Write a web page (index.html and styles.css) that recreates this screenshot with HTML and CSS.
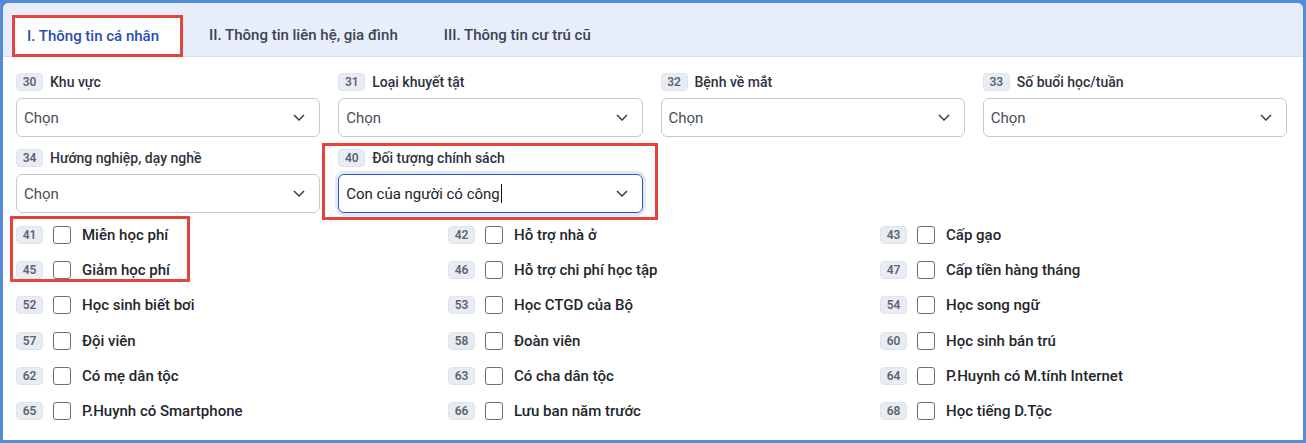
FILE: index.html
```html
<!DOCTYPE html>
<html lang="vi">
<head>
    <meta charset="UTF-8">
    <meta name="viewport" content="width=device-width, initial-scale=1.0">
    <title>Thông tin học sinh</title>
    <link rel="stylesheet" href="styles.css">
</head>
<body>

<div class="khung">
    <div class="the">

        <!-- Thanh tab -->
        <div class="tabs">
            <div class="tab tab-active">I. Thông tin cá nhân</div>
            <div class="tab">II. Thông tin liên hệ, gia đình</div>
            <div class="tab">III. Thông tin cư trú cũ</div>
        </div>

        <div class="noi-dung">

            <!-- Các ô chọn -->
            <div class="luoi-chon">
                <div class="truong">
                    <div class="nhan"><span class="so">30</span>Khu vực</div>
                    <div class="chon"><span>Chọn</span><svg width="12" height="7" viewBox="0 0 12 7"><path d="M1 1l5 5 5-5" fill="none" stroke="#3a3f4a" stroke-width="1.5"/></svg></div>
                </div>
                <div class="truong">
                    <div class="nhan"><span class="so">31</span>Loại khuyết tật</div>
                    <div class="chon"><span>Chọn</span><svg width="12" height="7" viewBox="0 0 12 7"><path d="M1 1l5 5 5-5" fill="none" stroke="#3a3f4a" stroke-width="1.5"/></svg></div>
                </div>
                <div class="truong">
                    <div class="nhan"><span class="so">32</span>Bệnh về mắt</div>
                    <div class="chon"><span>Chọn</span><svg width="12" height="7" viewBox="0 0 12 7"><path d="M1 1l5 5 5-5" fill="none" stroke="#3a3f4a" stroke-width="1.5"/></svg></div>
                </div>
                <div class="truong">
                    <div class="nhan"><span class="so">33</span>Số buổi học/tuần</div>
                    <div class="chon"><span>Chọn</span><svg width="12" height="7" viewBox="0 0 12 7"><path d="M1 1l5 5 5-5" fill="none" stroke="#3a3f4a" stroke-width="1.5"/></svg></div>
                </div>
                <div class="truong">
                    <div class="nhan"><span class="so">34</span>Hướng nghiệp, dạy nghề</div>
                    <div class="chon"><span>Chọn</span><svg width="12" height="7" viewBox="0 0 12 7"><path d="M1 1l5 5 5-5" fill="none" stroke="#3a3f4a" stroke-width="1.5"/></svg></div>
                </div>
                <div class="truong danh-dau">
                    <div class="nhan"><span class="so">40</span>Đối tượng chính sách</div>
                    <div class="chon chon-focus"><span class="gia-tri">Con của người có công<i class="con-tro"></i></span><svg width="12" height="7" viewBox="0 0 12 7"><path d="M1 1l5 5 5-5" fill="none" stroke="#3a3f4a" stroke-width="1.5"/></svg></div>
                </div>
            </div>

            <!-- Các ô đánh dấu -->
            <div class="luoi-check">
                <div class="khung-do"></div>

                <label class="dong"><span class="so">41</span><span class="o"></span>Miễn học phí</label>
                <label class="dong"><span class="so">42</span><span class="o"></span>Hỗ trợ nhà ở</label>
                <label class="dong"><span class="so">43</span><span class="o"></span>Cấp gạo</label>

                <label class="dong"><span class="so">45</span><span class="o"></span>Giảm học phí</label>
                <label class="dong"><span class="so">46</span><span class="o"></span>Hỗ trợ chi phí học tập</label>
                <label class="dong"><span class="so">47</span><span class="o"></span>Cấp tiền hàng tháng</label>

                <label class="dong"><span class="so">52</span><span class="o"></span>Học sinh biết bơi</label>
                <label class="dong"><span class="so">53</span><span class="o"></span>Học CTGD của Bộ</label>
                <label class="dong"><span class="so">54</span><span class="o"></span>Học song ngữ</label>

                <label class="dong"><span class="so">57</span><span class="o"></span>Đội viên</label>
                <label class="dong"><span class="so">58</span><span class="o"></span>Đoàn viên</label>
                <label class="dong"><span class="so">60</span><span class="o"></span>Học sinh bán trú</label>

                <label class="dong"><span class="so">62</span><span class="o"></span>Có mẹ dân tộc</label>
                <label class="dong"><span class="so">63</span><span class="o"></span>Có cha dân tộc</label>
                <label class="dong"><span class="so">64</span><span class="o"></span>P.Huynh có M.tính Internet</label>

                <label class="dong"><span class="so">65</span><span class="o"></span>P.Huynh có Smartphone</label>
                <label class="dong"><span class="so">66</span><span class="o"></span>Lưu ban năm trước</label>
                <label class="dong"><span class="so">68</span><span class="o"></span>Học tiếng D.Tộc</label>
            </div>

        </div>
    </div>
</div>

</body>
</html>
```

FILE: styles.css
```css
body {
    margin: 0;
    font-family: Roboto, 'Liberation Sans', sans-serif;
    background-color: #fff;
}

.khung {
    width: 1306px;
    height: 443px;
    box-sizing: border-box;
    background-color: #558cd8;
    padding: 3px;
}

.the {
    height: 100%;
    background-color: #fff;
    border-radius: 6px 6px 0 0;
    overflow: hidden;
}

/* Tabs */
.tabs {
    display: flex;
    align-items: flex-end;
    height: 54px;
    box-sizing: border-box;
    background-color: #e8eef9;
    border-bottom: 1px solid #d6deee;
    padding-left: 9px;
}

.tab {
    height: 42px;
    display: flex;
    align-items: center;
    padding: 0 23px;
    font-size: 15px;
    font-weight: 500;
    color: #3b4354;
}

.tab-active {
    height: 42px;
    box-sizing: border-box;
    margin-bottom: -1px;
    padding: 0 21px 0 12px;
    background-color: #fff;
    border: 3px solid #e5443d;
    color: #2a4db3;
    margin-right: 3px;
}

/* Nội dung */
.noi-dung {
    padding: 16px 16px 0 13px;
}

.luoi-chon {
    display: grid;
    grid-template-columns: repeat(4, 1fr);
    column-gap: 18px;
    row-gap: 12px;
}

.truong {
    position: relative;
}

.nhan {
    display: flex;
    align-items: center;
    height: 18px;
    font-size: 14px;
    font-weight: 500;
    color: #2d3340;
    margin-bottom: 7px;
}

.so {
    display: inline-flex;
    align-items: center;
    justify-content: center;
    width: 27px;
    height: 18px;
    box-sizing: border-box;
    background-color: #e9edf3;
    border: 1px solid #dfe4ec;
    border-radius: 4px;
    font-size: 12px;
    font-weight: 600;
    color: #5d6475;
    margin-right: 7px;
    flex-shrink: 0;
}

.chon {
    height: 39px;
    box-sizing: border-box;
    border: 1px solid #c9c9cc;
    border-radius: 6px;
    display: flex;
    align-items: center;
    justify-content: space-between;
    padding: 0 14px 0 7px;
    font-size: 15px;
    color: #4a4d55;
}

.chon-focus {
    border-color: #2f55c8;
    box-shadow: 0 0 0 3px #e3e9f7;
    color: #1f2228;
}

.gia-tri {
    display: flex;
    align-items: center;
}

.con-tro {
    display: inline-block;
    width: 1.5px;
    height: 19px;
    background-color: #111;
    margin-left: 1px;
}

/* Khung đỏ đánh dấu */
.danh-dau::after {
    content: "";
    position: absolute;
    left: -16px;
    right: -15px;
    top: -6px;
    bottom: -7px;
    border: 3px solid #e5443d;
}

/* Ô đánh dấu */
.luoi-check {
    position: relative;
    display: grid;
    grid-template-columns: repeat(3, 1fr);
    column-gap: 25px;
    margin-top: 4px;
}

.dong {
    display: flex;
    align-items: center;
    height: 35.3px;
    font-size: 15px;
    font-weight: 500;
    color: #23262d;
}

.dong .so {
    margin-right: 10px;
}

.o {
    width: 18px;
    height: 18px;
    box-sizing: border-box;
    border: 1.5px solid #6b6e75;
    border-radius: 3px;
    margin-right: 11px;
    flex-shrink: 0;
}

.khung-do {
    position: absolute;
    left: -6px;
    top: -1px;
    width: 180px;
    height: 66px;
    box-sizing: border-box;
    border: 3px solid #e5443d;
}
```
